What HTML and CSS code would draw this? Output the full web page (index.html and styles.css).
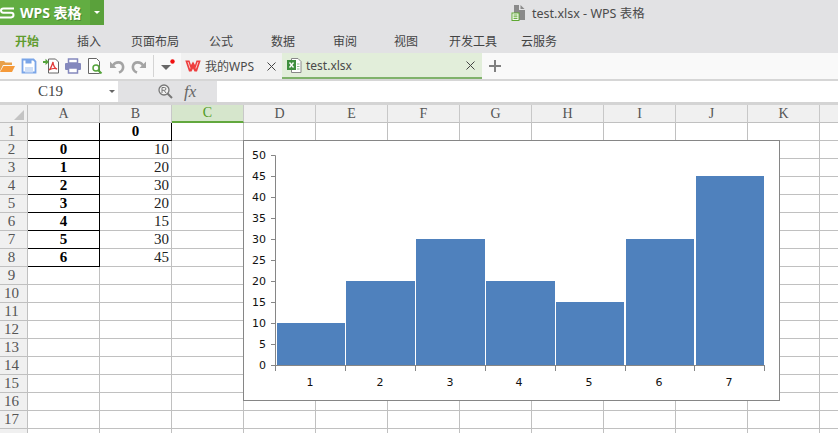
FILE: index.html
```html
<!DOCTYPE html>
<html lang="zh">
<head>
<meta charset="utf-8">
<title>test.xlsx - WPS 表格</title>
<link rel="stylesheet" href="styles.css">
</head>
<body>
<div class="app">
  <header class="titlebar">
    <div class="app-btn">
      <svg class="app-logo" width="15" height="12" viewBox="0 0 15 12"><path d="M14 1.5H3.5Q1 1.500 1 3.500T3.500 5.800H11Q13.500 5.800 13.500 8T11 10.500H0" fill="none" stroke="#fff" stroke-width="2"/></svg>
      <span class="app-name">WPS 表格</span>
      <span class="app-drop"><i class="tri-white"></i></span>
    </div>
    <div class="doc-title">
      <svg width="16" height="16" viewBox="0 0 16 16"><path d="M3 0h5v5h6v10H3z" fill="#8a8a8a"/><path d="M9.500 0l4 4h-4z" fill="#8a8a8a"/><rect x="1" y="8" width="7" height="7.500" fill="#fff" stroke="#5ea832"/><path d="M2.500 10h4M2.500 11.800h4M2.500 13.600h4" stroke="#5ea832"/></svg>
      <span>test.xlsx - WPS 表格</span>
    </div>
  </header>

  <nav class="ribbon">
    <span class="ribbon-tab is-active">开始</span>
    <span class="ribbon-tab">插入</span>
    <span class="ribbon-tab">页面布局</span>
    <span class="ribbon-tab">公式</span>
    <span class="ribbon-tab">数据</span>
    <span class="ribbon-tab">审阅</span>
    <span class="ribbon-tab">视图</span>
    <span class="ribbon-tab">开发工具</span>
    <span class="ribbon-tab">云服务</span>
  </nav>

  <div class="toolbar">
    <div class="quick">
      <svg class="ico" viewBox="0 0 16 16"><path d="M0 3h5l1.500 1.500H13V7H4L1 13H0z" fill="#e8a04a"/><path d="M4.500 8H16l-3 6H1z" fill="#f59a3a"/></svg>
      <svg class="ico" viewBox="0 0 16 16"><path d="M1.500 1.500h11l2 2v11h-13z" fill="#fff" stroke="#7aa5e8" stroke-width="1.800"/><rect x="4.500" y="1.500" width="6" height="4" fill="#7aa5e8"/><rect x="4" y="9" width="8" height="5.500" fill="#cfdff7"/></svg>
      <svg class="ico" viewBox="0 0 16 16"><path d="M5.500 1h7l3 3v11h-10z" fill="#fff" stroke="#666"/><path d="M0 3h2.500V.8L6 4 2.500 7V5H0z" fill="#55a43c"/><path d="M10 4c-1 3-2 7-4 8 2-1 6-2 8-1-2 0-4-4-4-7z" fill="none" stroke="#e23b3b" stroke-width="1.300"/></svg>
      <svg class="ico" viewBox="0 0 16 16"><rect x="3.500" y="1" width="9" height="4" fill="#fff" stroke="#8488bd" stroke-width="1.500"/><rect x="0" y="5" width="16" height="7" rx="1" fill="#8488bd"/><rect x="3.500" y="10" width="9" height="5" fill="#fff" stroke="#8488bd" stroke-width="1.500"/></svg>
      <svg class="ico" viewBox="0 0 16 16"><path d="M1.500 .5h8l3 3V15.500h-11z" fill="#fff" stroke="#666"/><circle cx="9" cy="10" r="3" fill="#fff" stroke="#55a43c" stroke-width="1.500"/><path d="M11 12l3.500 3.500" stroke="#55a43c" stroke-width="2"/></svg>
      <svg class="ico" viewBox="0 0 16 16"><path d="M1 3.500v6.500h6.500z" fill="#a4a4a4"/><path d="M4 7.500C6 3.500 13 3 14 8c.5 3-1.500 5.500-4 6.500" fill="none" stroke="#a4a4a4" stroke-width="2.600"/></svg>
      <svg class="ico" viewBox="0 0 16 16"><path d="M15 3.500v6.500H8.500z" fill="#a4a4a4"/><path d="M12 7.500C10 3.500 3 3 2 8c-.5 3 1.500 5.500 4 6.500" fill="none" stroke="#a4a4a4" stroke-width="2.600"/></svg>
      <span class="sep"></span>
      <svg class="ico-more" width="15" height="16" viewBox="0 0 15 16"><path d="M0 7h10L5 12z" fill="#666"/><circle cx="11.500" cy="3.500" r="2.200" fill="#f01010"/></svg>
    </div>
    <div class="doc-tab">
      <svg class="tab-logo" width="16" height="12" viewBox="0 0 16 12"><path d="M.3.500h4.200l1.500 4.500L8 1.500 10 5l1.500-4.500h4.200L12 11.500H9.500L8 8.500l-1.500 3H4z" fill="#ee3f3f"/><path d="M3 2l2.200 6.500M13 2l-2.200 6.500" stroke="#fff" stroke-width=".7"/></svg>
      <span class="tab-text">我的WPS</span>
      <svg class="tab-close" width="9" height="9" viewBox="0 0 9 9"><path d="M.5.500l8 8M8.500.500l-8 8" stroke="#444"/></svg>
    </div>
    <div class="doc-tab is-open">
      <svg class="tab-logo" width="15" height="15" viewBox="0 0 15 15"><path d="M4.500 .5h6.500l3 3v11H4.500z" fill="#fff" stroke="#888"/><rect x="0" y="2" width="9" height="10" fill="#3e8f3e"/><path d="M2.500 4.500l4 5M6.500 4.500l-4 5" stroke="#fff" stroke-width="1.300"/><path d="M10 6h2.500M10 8.500h2.500M10 11h2.500" stroke="#8cbf8c"/></svg>
      <span class="tab-text">test.xlsx</span>
      <svg class="tab-close" width="9" height="9" viewBox="0 0 9 9"><path d="M.5.500l8 8M8.500.500l-8 8" stroke="#444"/></svg>
    </div>
    <svg class="tab-add" width="12" height="12" viewBox="0 0 12 12"><path d="M0 6h12M6 0v12" stroke="#808080" stroke-width="2"/></svg>
  </div>

  <div class="formula-bar">
    <div class="name-box"><span class="name-text">C19</span><i class="tri-grey"></i></div>
    <div class="formula-tools">
      <svg width="15" height="15" viewBox="0 0 15 15"><circle cx="6" cy="6" r="5" fill="#f2f2f2" stroke="#777" stroke-width="1.300"/><path d="M9.500 9.500l4.500 4.500" stroke="#777" stroke-width="2"/><path d="M4 9V3.500h2.500a1.400 1.400 0 0 1 0 2.800H4M6 6.300L8 9" fill="none" stroke="#777"/></svg>
      <span class="fx">fx</span>
    </div>
    <div class="formula-input"></div>
  </div>

  <main class="sheet">
    <table class="grid">
      <thead>
        <tr><th class="corner"></th><th>A</th><th>B</th><th class="is-sel">C</th><th>D</th><th>E</th><th>F</th><th>G</th><th>H</th><th>I</th><th>J</th><th>K</th><th></th></tr>
      </thead>
      <tbody>
        <tr><th>1</th><td class="box"></td><td class="box key">0</td><td></td><td></td><td></td><td></td><td></td><td></td><td></td><td></td><td></td><td></td></tr>
        <tr><th>2</th><td class="box key">0</td><td class="num">10</td><td></td><td></td><td></td><td></td><td></td><td></td><td></td><td></td><td></td><td></td></tr>
        <tr><th>3</th><td class="box key">1</td><td class="num">20</td><td></td><td></td><td></td><td></td><td></td><td></td><td></td><td></td><td></td><td></td></tr>
        <tr><th>4</th><td class="box key">2</td><td class="num">30</td><td></td><td></td><td></td><td></td><td></td><td></td><td></td><td></td><td></td><td></td></tr>
        <tr><th>5</th><td class="box key">3</td><td class="num">20</td><td></td><td></td><td></td><td></td><td></td><td></td><td></td><td></td><td></td><td></td></tr>
        <tr><th>6</th><td class="box key">4</td><td class="num">15</td><td></td><td></td><td></td><td></td><td></td><td></td><td></td><td></td><td></td><td></td></tr>
        <tr><th>7</th><td class="box key">5</td><td class="num">30</td><td></td><td></td><td></td><td></td><td></td><td></td><td></td><td></td><td></td><td></td></tr>
        <tr><th>8</th><td class="box key">6</td><td class="num">45</td><td></td><td></td><td></td><td></td><td></td><td></td><td></td><td></td><td></td><td></td></tr>
        <tr><th>9</th><td></td><td></td><td></td><td></td><td></td><td></td><td></td><td></td><td></td><td></td><td></td><td></td></tr>
        <tr><th>10</th><td></td><td></td><td></td><td></td><td></td><td></td><td></td><td></td><td></td><td></td><td></td><td></td></tr>
        <tr><th>11</th><td></td><td></td><td></td><td></td><td></td><td></td><td></td><td></td><td></td><td></td><td></td><td></td></tr>
        <tr><th>12</th><td></td><td></td><td></td><td></td><td></td><td></td><td></td><td></td><td></td><td></td><td></td><td></td></tr>
        <tr><th>13</th><td></td><td></td><td></td><td></td><td></td><td></td><td></td><td></td><td></td><td></td><td></td><td></td></tr>
        <tr><th>14</th><td></td><td></td><td></td><td></td><td></td><td></td><td></td><td></td><td></td><td></td><td></td><td></td></tr>
        <tr><th>15</th><td></td><td></td><td></td><td></td><td></td><td></td><td></td><td></td><td></td><td></td><td></td><td></td></tr>
        <tr><th>16</th><td></td><td></td><td></td><td></td><td></td><td></td><td></td><td></td><td></td><td></td><td></td><td></td></tr>
        <tr><th>17</th><td></td><td></td><td></td><td></td><td></td><td></td><td></td><td></td><td></td><td></td><td></td><td></td></tr>
        <tr><th></th><td></td><td></td><td></td><td></td><td></td><td></td><td></td><td></td><td></td><td></td><td></td><td></td></tr>
      </tbody>
    </table>

    <figure class="chart">
      <svg width="535" height="259" viewBox="244 141 535 259">
        <g class="bars">
          <rect x="277" y="323" width="68" height="42"/>
          <rect x="346" y="281" width="69" height="84"/>
          <rect x="416" y="239" width="69" height="126"/>
          <rect x="486" y="281" width="69" height="84"/>
          <rect x="556" y="302" width="68" height="63"/>
          <rect x="626" y="239" width="68" height="126"/>
          <rect x="696" y="176" width="68" height="189"/>
        </g>
        <path class="axis" d="M271 155.500h4.500V365.500H765M271 176.500h4M271 197.500h4M271 218.500h4M271 239.500h4M271 260.500h4M271 281.500h4M271 302.500h4M271 323.500h4M271 344.500h4M271 365.500h4M275.500 365v6M345.500 365v6M415.500 365v6M485.500 365v6M555.500 365v6M625.500 365v6M694.500 365v6M764.500 365v6"/>
        <g class="y-labels">
          <text x="266" y="159">50</text><text x="266" y="180">45</text><text x="266" y="201">40</text><text x="266" y="222">35</text><text x="266" y="243">30</text><text x="266" y="264">25</text><text x="266" y="285">20</text><text x="266" y="306">15</text><text x="266" y="327">10</text><text x="266" y="348">5</text><text x="266" y="369">0</text>
        </g>
        <g class="x-labels">
          <text x="310" y="386">1</text><text x="380" y="386">2</text><text x="450" y="386">3</text><text x="519" y="386">4</text><text x="589" y="386">5</text><text x="659" y="386">6</text><text x="729" y="386">7</text>
        </g>
      </svg>
    </figure>
  </main>
</div>
</body>
</html>
```

FILE: styles.css
```css
* { box-sizing: border-box; }

html, body {
  margin: 0;
  padding: 0;
  overflow: hidden;
}

.app {
  width: 838px;
  height: 433px;
  overflow: hidden;
  display: flex;
  flex-direction: column;
  background: #e2e2e4;
  font-family: "Noto Sans", "Noto Sans CJK SC", sans-serif;
  font-size: 12px;
  color: #444;
}

/* title bar */
.titlebar {
  height: 25px;
  flex: none;
  display: flex;
  align-items: center;
}

.app-btn {
  width: 104px;
  height: 25px;
  display: flex;
  align-items: center;
  background: #62ad42;
  color: #fff;
}

.app-logo {
  flex: none;
}

.app-name {
  margin-left: 5px;
  font-size: 14px;
  font-weight: 700;
  line-height: 25px;
  white-space: nowrap;
  text-shadow: 1px 1px 0 #4d8a33;
}

.app-drop {
  margin-left: auto;
  width: 14px;
  height: 25px;
  display: flex;
  align-items: center;
  justify-content: center;
  background: #5aa13b;
}

.tri-white {
  border-top: 3px solid #fff;
  border-left: 3px solid transparent;
  border-right: 3px solid transparent;
}

.doc-title {
  margin-left: 407px;
  display: flex;
  align-items: center;
  gap: 5px;
  font-size: 12.5px;
  white-space: nowrap;
  color: #4a4a4a;
}

/* ribbon */
.ribbon {
  height: 28px;
  flex: none;
  padding-left: 15px;
  padding-top: 5px;
  display: grid;
  grid-template-columns: 62px 54px 78px 62px 62px 61px 55px 72px auto;
  align-items: center;
  color: #444;
  line-height: 23px;
}

.ribbon-tab.is-active {
  color: #5f9c2f;
  font-weight: 700;
}

/* toolbar + document tabs */
.toolbar {
  height: 26px;
  flex: none;
  display: flex;
  align-items: center;
  background: #f9f9f9;
}

.quick {
  width: 182px;
  height: 26px;
  flex: none;
  display: flex;
  align-items: center;
  gap: 6px;
  margin-left: -1px;
  padding-bottom: 1px;
}

.ico {
  width: 16px;
  height: 16px;
  flex: none;
}

.sep {
  width: 1px;
  height: 22px;
  background: #d4d4d4;
  flex: none;
}

.ico-more {
  flex: none;
  margin-left: 1px;
}

.doc-tab {
  width: 101px;
  height: 26px;
  flex: none;
  display: flex;
  align-items: center;
  padding-left: 4px;
  background: #f1f1f1;
  color: #4a4a4a;
}

.tab-logo {
  flex: none;
  margin-right: 4px;
}

.tab-text {
  white-space: nowrap;
}

.tab-close {
  margin-left: auto;
  margin-right: 6px;
  flex: none;
}

.doc-tab.is-open {
  width: 200px;
  background: #e2eeda;
  border-bottom: 2px solid #7fb26a;
  padding-left: 5px;
}

.doc-tab.is-open .tab-close {
  margin-right: 7px;
}

.tab-add {
  margin-left: 7px;
  flex: none;
}

/* formula bar */
.formula-bar {
  height: 26px;
  flex: none;
  display: flex;
  background: #e2e2e4;
  border-top: 2px solid #d6d6d6;
  border-bottom: 3px solid #d4d4d4;
}

.name-box {
  width: 118px;
  height: 21px;
  flex: none;
  display: flex;
  align-items: center;
  background: #fff;
  font-family: "Liberation Serif", serif;
  font-size: 15px;
  color: #444;
}

.name-text {
  margin-left: 38px;
}

.tri-grey {
  margin-left: auto;
  margin-right: 3px;
  border-top: 3px solid #666;
  border-left: 3px solid transparent;
  border-right: 3px solid transparent;
}

.formula-tools {
  width: 99px;
  height: 21px;
  flex: none;
  display: flex;
  align-items: center;
  padding-left: 40px;
  gap: 11px;
}

.fx {
  font-family: "Liberation Serif", serif;
  font-style: italic;
  font-size: 17px;
  color: #666;
  line-height: 21px;
}

.formula-input {
  flex: 1;
  height: 21px;
  background: #fff;
}

/* sheet */
.sheet {
  position: relative;
  flex: 1;
  background: #fff;
  overflow: hidden;
}

.grid {
  border-collapse: separate;
  border-spacing: 0;
  table-layout: fixed;
  width: 892px;
  font-family: "Liberation Serif", serif;
  font-size: 15px;
}

.grid th,
.grid td {
  height: 18px;
  width: 72px;
  padding: 0;
  line-height: 17px;
  border-right: 1px solid #c0c0c0;
  border-bottom: 1px solid #c0c0c0;
  overflow: hidden;
}

.grid th {
  background: #f0f0f0;
  font-weight: 400;
  color: #555;
  text-align: center;
}

.grid thead th {
  font-size: 14px;
  line-height: 16px;
  border-right-color: #c8c8c8;
  border-bottom-color: #c0c0c0;
}

.grid th:first-child {
  width: 28px;
  padding-right: 4px;
  border-right-color: #c0c0c0;
}

.grid thead th.corner {
  position: relative;
}

.corner::after {
  content: "";
  position: absolute;
  left: 14px;
  top: 5px;
  width: 10px;
  height: 10px;
  background: #c4c4c4;
  clip-path: polygon(100% 0, 100% 100%, 0 100%);
}

.grid thead th.is-sel {
  background: #d6e6cc;
  color: #4f9a22;
  border-bottom: 2px solid #62a83e;
}

.grid td.box {
  border-right-color: #000;
  border-bottom-color: #000;
}

.grid td.key {
  font-weight: 700;
  color: #000;
  text-align: center;
}

.grid td.num {
  color: #222;
  text-align: right;
  padding-right: 2px;
}

/* chart */
.chart {
  position: absolute;
  left: 243px;
  top: 35px;
  width: 537px;
  height: 261px;
  margin: 0;
  background: #fff;
  border: 1px solid #868686;
}

.chart svg {
  display: block;
}

.bars rect {
  fill: #4f81bd;
}

.axis {
  fill: none;
  stroke: #868686;
  stroke-width: 1;
}

.y-labels text,
.x-labels text {
  font-family: "DejaVu Sans", sans-serif;
  font-size: 11px;
  fill: #111;
}

.y-labels text {
  text-anchor: end;
}

.x-labels text {
  text-anchor: middle;
}
```
